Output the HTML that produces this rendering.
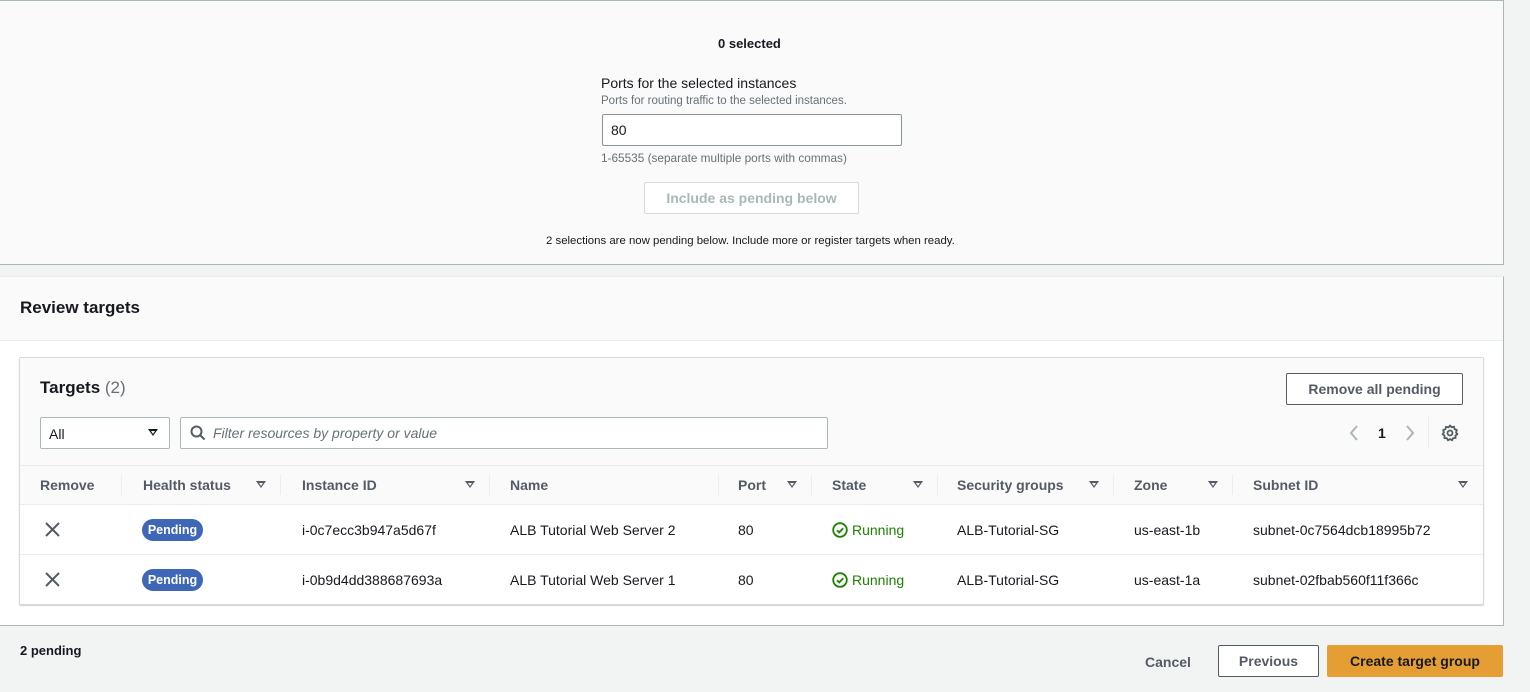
<!DOCTYPE html>
<html><head><meta charset="utf-8"><style>
*{box-sizing:border-box;margin:0;padding:0}
body{width:1530px;height:692px;background:#f2f3f3;font-family:"Liberation Sans",sans-serif;color:#16191f;position:relative;overflow:hidden;font-size:14px}
.a{position:absolute;white-space:nowrap}
.b{font-weight:bold}
.tri{position:absolute;width:0;height:0;border-left:5px solid transparent;border-right:5px solid transparent;border-top:7px solid #545b64}
.tri:after{content:"";position:absolute;left:-2px;top:-5.5px;border-left:2px solid transparent;border-right:2px solid transparent;border-top:3px solid #fafafa}
.sep{position:absolute;top:475px;width:1px;height:20px;background:#eaeded}
.pend{position:absolute;background:#3f67b8;color:#fff;font-size:12.5px;font-weight:bold;border-radius:12px;width:61px;height:22px;line-height:22px;text-align:center}
.run{color:#1d8102}
</style></head><body>
<div class="a" style="left:-1px;top:0;width:1505px;height:265px;background:#fafafa;border:1px solid #aab7b8"></div>
<div class="a b" style="left:718px;top:36px;font-size:13px">0 selected</div>
<div class="a" style="left:601px;top:75px;font-size:14px">Ports for the selected instances</div>
<div class="a" style="left:601px;top:95px;font-size:11.5px;color:#687078">Ports for routing traffic to the selected instances.</div>
<div class="a" style="left:602px;top:114px;width:300px;height:32px;background:#fff;border:1px solid #879596;border-radius:2px;padding:7px 8px;font-size:14px">80</div>
<div class="a" style="left:601px;top:151px;font-size:11.8px;color:#687078">1-65535 (separate multiple ports with commas)</div>
<div class="a b" style="left:644px;top:182px;width:215px;height:32px;background:#fff;border:1px solid #d5dbdb;border-radius:2px;color:#aab7b8;text-align:center;line-height:31px;font-size:14px">Include as pending below</div>
<div class="a" style="left:546px;top:235px;font-size:11.4px;color:#16191f">2 selections are now pending below. Include more or register targets when ready.</div>

<div class="a" style="left:-1px;top:276px;width:1505px;height:350px;background:#fff;border:1px solid #aab7b8;border-top:1px solid #eaeded"></div>
<div class="a" style="left:0;top:277px;width:1503px;height:64px;background:#fafafa;border-bottom:1px solid #eaeded"></div>
<div class="a b" style="left:20px;top:298px;font-size:17px">Review targets</div>

<div class="a" style="left:19px;top:357px;width:1465px;height:248px;background:#fff;border:1px solid #d5dbdb;border-radius:2px;box-shadow:0 1px 1px rgba(0,28,36,.2)"></div>
<div class="a" style="left:20px;top:358px;width:1463px;height:147px;background:#fafafa;border-bottom:1px solid #eaeded"></div>
<div class="a" style="left:20px;top:465px;width:1463px;height:1px;background:#eaeded"></div>
<div class="a" style="left:20px;top:554px;width:1463px;height:1px;background:#eaeded"></div>
<div class="a" style="left:40px;top:378px;font-size:17px"><span class="b">Targets</span> <span style="color:#687078">(2)</span></div>
<div class="a b" style="left:1286px;top:373px;width:177px;height:32px;background:#fff;border:1px solid #545b64;border-radius:2px;text-align:center;line-height:31px;color:#545b64;font-size:14px">Remove all pending</div>
<div class="a" style="left:40px;top:417px;width:130px;height:32px;background:#fff;border:1px solid #aab7b8;border-radius:2px;padding:8px 8px;font-size:14px">All</div>
<div class="tri" style="left:148px;top:429px;border-top-color:#16191f"></div>
<div class="a" style="left:180px;top:417px;width:648px;height:32px;background:#fff;border:1px solid #aab7b8;border-radius:2px"></div>
<svg class="a" style="left:190px;top:425px" width="16" height="16" viewBox="0 0 16 16"><circle cx="6.5" cy="6.5" r="5" fill="none" stroke="#545b64" stroke-width="2"/><path d="M10 10l4.5 4.5" stroke="#545b64" stroke-width="2"/></svg>
<div class="a" style="left:213px;top:425px;font-size:14px;font-style:italic;color:#687078">Filter resources by property or value</div>
<svg class="a" style="left:1347px;top:424px" width="80" height="18" viewBox="0 0 80 18"><path d="M10 2L4 9l6 7" fill="none" stroke="#aab7b8" stroke-width="2"/><path d="M60 2l6 7-6 7" fill="none" stroke="#aab7b8" stroke-width="2"/></svg>
<div class="a b" style="left:1378px;top:425px;font-size:14px">1</div>
<div class="a" style="left:1428px;top:417px;width:1px;height:32px;background:#eaeded"></div>
<svg class="a" style="left:1441px;top:424px" width="18" height="18" viewBox="0 0 18 18"><path d="M9 1.5l1.6 1.8 2.4-.6.6 2.4 2.3.9-.9 2.3 1.4 1.9-2 1.3.2 2.5-2.5.1-1.1 2.2L9 15l-2 1.4-1.1-2.2-2.5-.1.2-2.5-2-1.3L3 8.4l-.9-2.3 2.3-.9.6-2.4 2.4.6z" fill="none" stroke="#545b64" stroke-width="1.8" stroke-linejoin="round"/><circle cx="9" cy="9" r="2.5" fill="none" stroke="#545b64" stroke-width="1.8"/></svg>

<div class="a b" style="left:40px;top:477px;color:#545b64">Remove</div>
<div class="sep" style="left:121px"></div>
<div class="a b" style="left:143px;top:477px;color:#545b64">Health status</div><div class="tri" style="left:256px;top:481px"></div>
<div class="sep" style="left:280px"></div>
<div class="a b" style="left:302px;top:477px;color:#545b64">Instance ID</div><div class="tri" style="left:465px;top:481px"></div>
<div class="sep" style="left:489px"></div>
<div class="a b" style="left:510px;top:477px;color:#545b64">Name</div>
<div class="sep" style="left:718px"></div>
<div class="a b" style="left:738px;top:477px;color:#545b64">Port</div><div class="tri" style="left:787px;top:481px"></div>
<div class="sep" style="left:811px"></div>
<div class="a b" style="left:832px;top:477px;color:#545b64">State</div><div class="tri" style="left:913px;top:481px"></div>
<div class="sep" style="left:937px"></div>
<div class="a b" style="left:957px;top:477px;color:#545b64">Security groups</div><div class="tri" style="left:1089px;top:481px"></div>
<div class="sep" style="left:1113px"></div>
<div class="a b" style="left:1134px;top:477px;color:#545b64">Zone</div><div class="tri" style="left:1208px;top:481px"></div>
<div class="sep" style="left:1232px"></div>
<div class="a b" style="left:1253px;top:477px;color:#545b64">Subnet ID</div><div class="tri" style="left:1458px;top:481px"></div>

<svg class="a" style="left:45px;top:522px" width="15" height="15"><path d="M1 1l13 13M14 1L1 14" stroke="#545b64" stroke-width="2"/></svg>
<div class="pend" style="left:142px;top:519px">Pending</div>
<div class="a" style="left:302px;top:522px">i-0c7ecc3b947a5d67f</div>
<div class="a" style="left:510px;top:522px">ALB Tutorial Web Server 2</div>
<div class="a" style="left:738px;top:522px">80</div>
<svg class="a" style="left:832px;top:522px" width="16" height="16"><circle cx="8" cy="8" r="6.8" fill="none" stroke="#1d8102" stroke-width="1.8"/><path d="M5 8.2l2.2 2.2 4-4.2" fill="none" stroke="#1d8102" stroke-width="1.8"/></svg>
<div class="a run" style="left:852px;top:522px">Running</div>
<div class="a" style="left:957px;top:522px">ALB-Tutorial-SG</div>
<div class="a" style="left:1134px;top:522px">us-east-1b</div>
<div class="a" style="left:1253px;top:522px">subnet-0c7564dcb18995b72</div>

<svg class="a" style="left:45px;top:572px" width="15" height="15"><path d="M1 1l13 13M14 1L1 14" stroke="#545b64" stroke-width="2"/></svg>
<div class="pend" style="left:142px;top:569px">Pending</div>
<div class="a" style="left:302px;top:572px">i-0b9d4dd388687693a</div>
<div class="a" style="left:510px;top:572px">ALB Tutorial Web Server 1</div>
<div class="a" style="left:738px;top:572px">80</div>
<svg class="a" style="left:832px;top:572px" width="16" height="16"><circle cx="8" cy="8" r="6.8" fill="none" stroke="#1d8102" stroke-width="1.8"/><path d="M5 8.2l2.2 2.2 4-4.2" fill="none" stroke="#1d8102" stroke-width="1.8"/></svg>
<div class="a run" style="left:852px;top:572px">Running</div>
<div class="a" style="left:957px;top:572px">ALB-Tutorial-SG</div>
<div class="a" style="left:1134px;top:572px">us-east-1a</div>
<div class="a" style="left:1253px;top:572px">subnet-02fbab560f11f366c</div>

<div class="a b" style="left:20px;top:643px;font-size:13px">2 pending</div>
<div class="a b" style="left:1145px;top:654px;color:#545b64;font-size:14px">Cancel</div>
<div class="a b" style="left:1218px;top:645px;width:101px;height:32px;background:#fff;border:1px solid #545b64;border-radius:2px;text-align:center;line-height:31px;color:#545b64;font-size:14px">Previous</div>
<div class="a b" style="left:1327px;top:645px;width:176px;height:32px;background:#e59e33;border-radius:2px;text-align:center;line-height:32px;color:#16191f;font-size:14px">Create target group</div>
</body></html>
